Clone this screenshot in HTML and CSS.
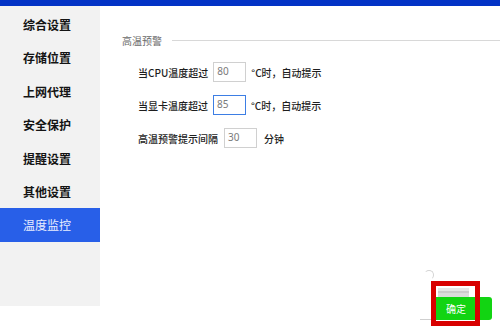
FILE: index.html
```html
<!DOCTYPE html>
<html lang="zh">
<head>
<meta charset="utf-8">
<link rel="stylesheet" href="styles.css">
</head>
<body>
<div class="topbar"></div>
<div class="main">
  <nav class="sidebar">
    <div class="nav-item">综合设置</div>
    <div class="nav-item">存储位置</div>
    <div class="nav-item">上网代理</div>
    <div class="nav-item">安全保护</div>
    <div class="nav-item">提醒设置</div>
    <div class="nav-item">其他设置</div>
    <div class="nav-item active">温度监控</div>
  </nav>
  <section class="content">
    <div class="group-head">
      <span class="group-label">高温预警</span>
      <span class="group-line"></span>
    </div>
    <div class="rows">
      <div class="row">
        <span class="label">当CPU温度超过</span>
        <span class="input">80</span>
        <span class="unit">°C时，自动提示</span>
      </div>
      <div class="row">
        <span class="label">当显卡温度超过</span>
        <span class="input focus">85</span>
        <span class="unit">°C时，自动提示</span>
      </div>
      <div class="row">
        <span class="label">高温预警提示间隔</span>
        <span class="input wide">30</span>
        <span class="unit">分钟</span>
      </div>
    </div>
    <div class="footer">
      <span class="ghost-line"></span>
      <span class="ghost-arc"></span>
      <button class="ok">确定</button>
      <span class="ghost-bars"></span>
      <span class="highlight"></span>
    </div>
  </section>
</div>
</body>
</html>
```
FILE: styles.css
```css
html, body {
  margin: 0;
  padding: 0;
  width: 500px;
  height: 328px;
  overflow: hidden;
  background: #ffffff;
  font-family: "Noto Sans CJK SC", "Noto Sans", sans-serif;
}
.topbar {
  height: 6px;
  background: #0333c6;
}
.main {
  display: flex;
  height: 322px;
}
.sidebar {
  width: 100px;
  height: 300px;
  background: #f2f2f2;
  padding-top: 2px;
  box-sizing: border-box;
}
.nav-item {
  height: 33.4px;
  line-height: 33.4px;
  padding-left: 23px;
  font-size: 12px;
  font-weight: 700;
  color: #141414;
}
.nav-item.active {
  background: #285fe8;
  color: #e8eeff;
  font-weight: 400;
}
.content {
  flex: 1;
  display: flex;
  flex-direction: column;
  padding: 24px 0 0 22px;
}
.group-head {
  display: flex;
  align-items: center;
  height: 20px;
}
.group-label {
  font-size: 10px;
  color: #6a6a6a;
}
.group-line {
  flex: 1;
  height: 1px;
  background: #d8d8d8;
  margin-left: 10px;
}
.rows {
  display: flex;
  flex-direction: column;
  gap: 13px;
  margin-top: 12px;
  padding-left: 16px;
}
.row {
  display: flex;
  align-items: center;
  height: 20px;
  font-size: 10px;
  color: #1e1e1e;
  font-weight: 500;
}
.input {
  width: 33px;
  height: 20px;
  box-sizing: border-box;
  border: 1px solid #d0d0d0;
  margin: 0 5px 0 5px;
  padding-left: 3px;
  line-height: 17px;
  font-family: "Noto Sans", sans-serif;
  font-size: 10px;
  font-weight: 400;
  color: #7a7a7a;
}
.input.focus {
  border-color: #3d7ee4;
}
.input.wide {
  margin: 0 7px 0 6px;
}
.footer {
  margin-top: auto;
  display: flex;
  justify-content: flex-end;
  padding: 0 8px 8px 0;
  position: relative;
}
.ok {
  width: 56px;
  height: 23px;
  border: none;
  border-radius: 0 3px 3px 0;
  background: #12d412;
  color: #ffffff;
  font-family: "Noto Sans CJK SC", sans-serif;
  font-size: 10px;
  padding: 0 16px 0 0;
}
.ghost-line {
  position: absolute;
  right: 68px;
  bottom: 8px;
  width: 12px;
  height: 1px;
  background: #cfcfcf;
}
.ghost-arc {
  position: absolute;
  right: 66px;
  bottom: 48px;
  width: 8px;
  height: 8px;
  border: 1px solid #d4d4d4;
  border-left-color: transparent;
  border-bottom-color: transparent;
  border-radius: 50%;
}
.ghost-bars {
  position: absolute;
  right: 31px;
  bottom: 31px;
  width: 31px;
  height: 9px;
  background: linear-gradient(#e6e6e6 0 30%, #cccccc 30% 60%, #dcdcdc 60% 100%);
}
.highlight {
  position: absolute;
  right: 20px;
  bottom: 2px;
  width: 49px;
  height: 45px;
  box-sizing: border-box;
  border: 5px solid #d80000;
}
```
